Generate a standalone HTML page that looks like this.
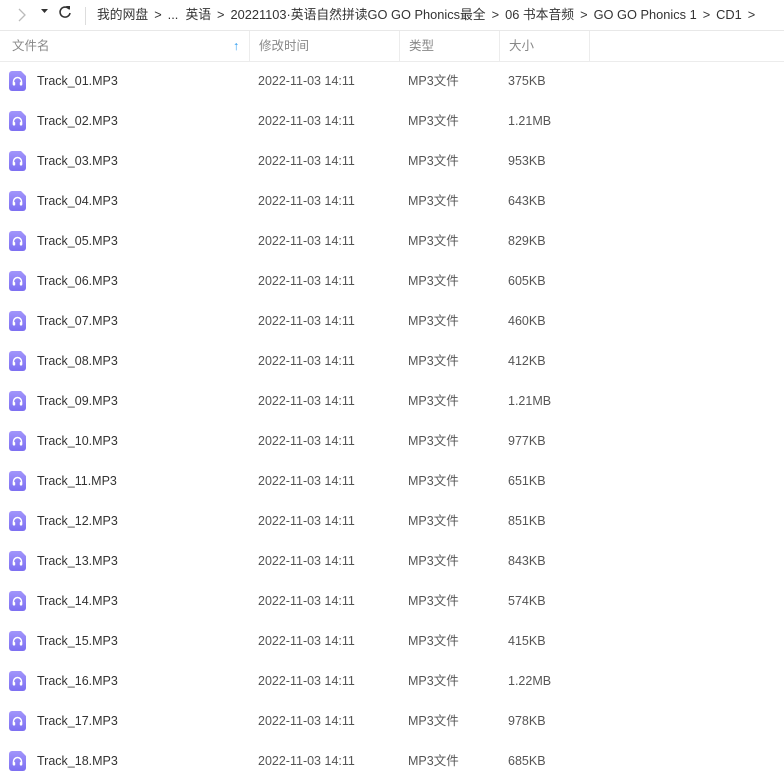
<!DOCTYPE html>
<html><head><meta charset="utf-8"><style>
body{margin:0;width:784px;height:773px;overflow:hidden;background:#fff;font-family:"Liberation Sans","Noto Sans CJK SC",sans-serif;font-size:12.5px;color:#333}
.top{position:absolute;top:0;left:0;right:0;height:30px;border-bottom:1px solid #e8e8e8}
.crumb{position:absolute;left:97px;top:4px;font-size:12.8px;color:#333;white-space:nowrap}
.crumb i{font-style:normal;margin:0 6px}
.hdr{position:absolute;top:31px;left:0;right:0;height:30px;border-bottom:1px solid #ececec;color:#888;font-size:12.5px}
.hdr div{position:absolute;top:0;height:30px;line-height:30px;border-right:1px solid #ececec;padding-left:9px;box-sizing:border-box}
.row{position:absolute;left:0;right:0;height:40px;line-height:40px}
.row span{position:absolute;top:0}
.ic{position:absolute;left:9px;top:10px}
</style></head><body>
<div class="top">
<svg style="position:absolute;left:16px;top:7px" width="12" height="16"><path d="M3 2l6 6-6 6" stroke="#bbb" fill="none" stroke-width="1.3"/></svg>
<svg style="position:absolute;left:41px;top:9px" width="8" height="6"><path d="M0 0h7l-3.5 4z" fill="#333"/></svg>
<svg style="position:absolute;left:57px;top:4px" width="16" height="16"><path d="M12 5A5 5 0 1 0 13 9" stroke="#333" fill="none" stroke-width="1.6"/><path d="M9 2l4 0 0 4z" fill="#333"/></svg>
<div style="position:absolute;left:85px;top:7px;width:1px;height:18px;background:#ddd"></div>
<div class="crumb">我的网盘<i>&gt;</i>...&nbsp; 英语<i>&gt;</i>20221103·英语自然拼读GO GO Phonics最全<i>&gt;</i>06 书本音频<i>&gt;</i>GO GO Phonics 1<i>&gt;</i>CD1<i>&gt;</i></div>
</div>
<div class="hdr">
<div style="left:0;width:250px;padding-left:12px">文件名<span style="position:absolute;left:233px;color:#2a9bf0;font-weight:bold">↑</span></div>
<div style="left:250px;width:150px">修改时间</div>
<div style="left:400px;width:100px">类型</div>
<div style="left:500px;width:90px">大小</div>
</div>
<div id="rows"></div>
<script>
var s=["375KB","1.21MB","953KB","643KB","829KB","605KB","460KB","412KB","1.21MB","977KB","651KB","851KB","843KB","574KB","415KB","1.22MB","978KB","685KB"];
var h="";
for(var i=0;i<18;i++){var n=("0"+(i+1)).slice(-2);
h+='<div class="row" style="top:'+(61+i*40)+'px"><svg class="ic" width="17" height="20" viewBox="0 0 17 20"><defs><linearGradient id="g'+i+'" x1="0" y1="0" x2="0" y2="1"><stop offset="0" stop-color="#a195fb"/><stop offset="1" stop-color="#7d6ff2"/></linearGradient></defs><path d="M3 0h9l5 5v12a3 3 0 0 1-3 3H3a3 3 0 0 1-3-3V3a3 3 0 0 1 3-3z" fill="url(#g'+i+')"/><path d="M4.5 13.5v-3a4 4 0 0 1 8 0v3" stroke="#fff" stroke-width="1.5" fill="none"/><rect x="3.8" y="11" width="2.4" height="3.5" rx="0.8" fill="#fff"/><rect x="10.8" y="11" width="2.4" height="3.5" rx="0.8" fill="#fff"/></svg>'
+'<span style="left:37px;color:#333">Track_'+n+'.MP3</span><span style="left:258px;color:#555">2022-11-03 14:11</span><span style="left:408px;color:#555">MP3文件</span><span style="left:508px;color:#555">'+s[i]+'</span></div>';}
document.getElementById("rows").innerHTML=h;
</script>
</body></html>
